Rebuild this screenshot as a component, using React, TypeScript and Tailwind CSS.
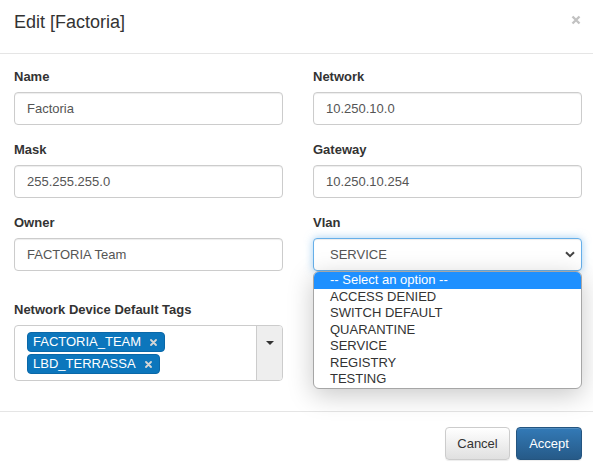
import React from "react";

const font = { fontFamily: '"Liberation Sans", Arial, sans-serif' };

function Field({ label, value }: { label: string; value: string }) {
  return (
    <div className="mb-[15px]">
      <label className="mb-[5px] block text-[13px] font-bold leading-5 text-[#333]">{label}</label>
      <div className="flex h-[33px] items-center rounded-[4px] border border-[#ccc] bg-white px-[12px] text-[13px] text-[#555] shadow-[inset_0_1px_1px_rgba(0,0,0,0.075)]">
        {value}
      </div>
    </div>
  );
}

function Tag({ text }: { text: string }) {
  return (
    <span className="inline-flex h-[20px] items-center rounded-[4px] border border-[#0a68a8] bg-[#0c76bc] pl-[5px] pr-[7px] text-[13px] leading-[18px] text-white">
      {text}
      <svg className="ml-[9px]" width="7" height="7" viewBox="0 0 7 7" aria-hidden>
        <path d="M1 1l5 5M6 1L1 6" stroke="#d6d6d6" strokeWidth="1.8" strokeLinecap="round" />
      </svg>
    </span>
  );
}

const vlanOptions = ["ACCESS DENIED", "SWITCH DEFAULT", "QUARANTINE", "SERVICE", "REGISTRY", "TESTING"];

export default function App() {
  return (
    <div className="h-[471px] w-[593px] overflow-hidden bg-white" style={font}>
      {/* header */}
      <div className="flex h-[54px] items-start justify-between border-b border-[#e5e5e5] pl-[14px] pr-[12px] pt-[10px]">
        <h4 className="text-[18px] leading-[24px] text-[#333]">Edit [Factoria]</h4>
        <button type="button" className="mt-[5px]" aria-label="Close">
          <svg width="10" height="10" viewBox="0 0 10 10" aria-hidden>
            <path d="M1.5 1.5l7 7M8.5 1.5l-7 7" stroke="#c2c2c2" strokeWidth="2.4" />
          </svg>
        </button>
      </div>

      {/* body */}
      <div className="pb-[30px] pl-[14px] pr-[11px] pt-[13px]">
        <div className="grid grid-cols-[269px_269px] gap-x-[30px]">
          <Field label="Name" value="Factoria" />
          <Field label="Network" value="10.250.10.0" />
          <Field label="Mask" value="255.255.255.0" />
          <Field label="Gateway" value="10.250.10.254" />
          <Field label="Owner" value="FACTORIA Team" />
          <div className="relative z-10 mb-[15px]">
            <label className="mb-[5px] block text-[13px] font-bold leading-5 text-[#333]">Vlan</label>
            <div className="flex h-[33px] items-center justify-between rounded-[4px] border border-[#66afe9] bg-white pl-[16px] pr-[6px] text-[13px] text-[#555] shadow-[inset_0_1px_1px_rgba(0,0,0,0.075),0_0_8px_rgba(102,175,233,0.6)]">
              <span>SERVICE</span>
              <svg width="10" height="7" viewBox="0 0 10 7" aria-hidden>
                <path d="M1 1.2l4 4 4-4" fill="none" stroke="#444" strokeWidth="2" />
              </svg>
            </div>
            <div className="absolute left-0 right-0 top-full overflow-hidden rounded-[6px] border border-[#a6a6a6] bg-white shadow-[0_6px_26px_rgba(0,0,0,0.22)]">
              <div className="bg-[#1e90ff] pl-[16px] text-[13px] leading-[16.5px] text-white">-- Select an option --</div>
              {vlanOptions.map((o) => (
                <div key={o} className="pl-[16px] text-[13px] leading-[16.5px] text-[#333]">
                  {o}
                </div>
              ))}
            </div>
          </div>
        </div>

        <div className="mt-[14px] w-[269px]">
          <label className="mb-[5px] block text-[13px] font-bold leading-5 text-[#333]">Network Device Default Tags</label>
          <div className="flex h-[56px] overflow-hidden rounded-[4px] border border-[#ccc] bg-white">
            <div className="flex flex-1 flex-wrap content-start gap-x-[4px] gap-y-[2px] pl-[12px] pt-[6px]">
              <Tag text="FACTORIA_TEAM" />
              <Tag text="LBD_TERRASSA" />
            </div>
            <div className="flex w-[26px] items-start justify-center border-l border-[#ccc] bg-[#eeeeee] pt-[15px]">
              <svg width="8" height="4" viewBox="0 0 8 4" aria-hidden>
                <path d="M0 0h8L4 4z" fill="#333" />
              </svg>
            </div>
          </div>
        </div>
      </div>

      {/* footer */}
      <div className="flex justify-end gap-[6px] border-t border-[#e5e5e5] pr-[11px] pt-[15px]">
        <button
          type="button"
          className="h-[33px] w-[65px] rounded-[4px] border border-[#ccc] bg-gradient-to-b from-white to-[#e0e0e0] text-[13px] text-[#333] shadow-[inset_0_1px_0_rgba(255,255,255,0.15),0_1px_1px_rgba(0,0,0,0.075)]"
        >
          Cancel
        </button>
        <button
          type="button"
          className="h-[33px] w-[66px] rounded-[4px] border border-[#245580] bg-gradient-to-b from-[#337ab7] to-[#265a88] text-[13px] text-white shadow-[inset_0_1px_0_rgba(255,255,255,0.15),0_1px_1px_rgba(0,0,0,0.075)]"
        >
          Accept
        </button>
      </div>
    </div>
  );
}
